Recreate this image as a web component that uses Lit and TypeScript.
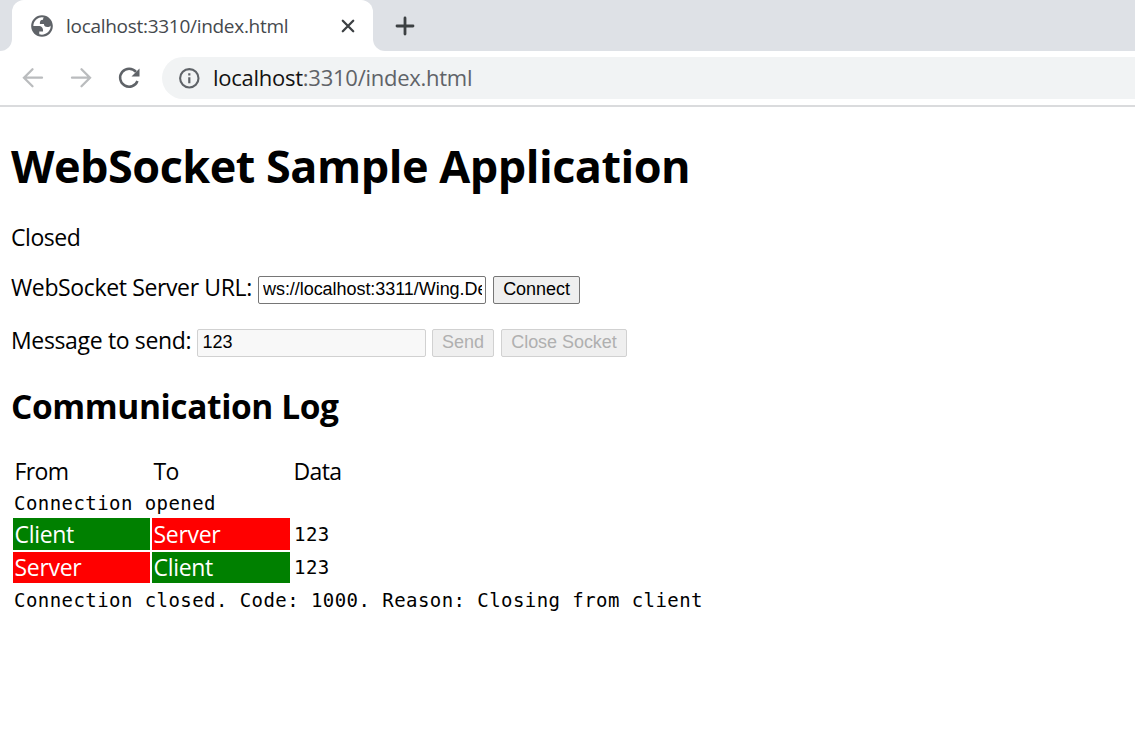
import { LitElement, html, css } from "lit";
import { customElement, property } from "lit/decorators.js";

@customElement("browser-chrome")
class BrowserChrome extends LitElement {
  @property() host = "";
  @property() path = "";

  static styles = css`
    :host { display: block; font-family: "Open Sans", "Noto Sans", sans-serif; }
    svg { display: block; flex: none; }
    .strip { display: flex; height: 51px; background: #dee1e6; }
    .flare { width: 12px; height: 51px; flex: none; background: #fff; }
    .flare i { display: block; height: 51px; background: #dee1e6; }
    .flare.left i { border-bottom-right-radius: 12px; }
    .flare.right i { border-bottom-left-radius: 12px; }
    .tab { box-sizing: border-box; width: 361px; height: 51px; background: #fff; border-radius: 12px 12px 0 0; display: flex; align-items: center; padding: 0 14px 0 17px; }
    .corner { background: #dee1e6; }
    .title { margin-left: 11px; flex: 1; font-size: 19px; line-height: 51px; padding-top: 2px; letter-spacing: -0.29px; color: #45494d; white-space: nowrap; }
    .plus { margin: 15px 0 0 9px; }
    .bar { box-sizing: border-box; height: 56px; border-bottom: 2px solid #dadbdd; display: flex; align-items: center; padding-left: 21px; background: #fff; }
    .nav { margin-right: 24px; }
    .pill { flex: 1; height: 42px; margin-left: -3px; background: #f1f3f4; border-radius: 21px 0 0 21px; display: flex; align-items: center; padding-left: 15px; }
    .url { margin-left: 12px; font-size: 22px; line-height: 40px; padding-bottom: 2px; letter-spacing: -0.26px; color: #5f6368; white-space: nowrap; }
    .url b { font-weight: 400; color: #111; }
  `;

  render() {
    return html`
      <div class="strip">
        <div class="flare left"><i></i></div>
        <div class="corner"><div class="tab">
          <svg width="26" height="26" viewBox="0 0 24 24"><path fill="#5f6368" fill-rule="evenodd" d="M12 2C6.480 2 2 6.480 2 12s4.480 10 10 10 10-4.480 10-10S17.520 2 12 2zM4 12h4.400c3.407.022 4.922 1.730 4.543 5.127H9.488v2.470a8.004 8.004 0 0 0 10.498-8.083C19.327 12.504 18.332 13 17 13c-2.137 0-3.206-.916-3.206-2.750h-3.748c-.274-2.728.683-4.092 2.870-4.092 0-.975.327-1.597.811-1.970A8.004 8.004 0 0 0 4 12z"/></svg>
          <span class="title">${this.host}${this.path}</span>
          <svg width="22" height="22" viewBox="0 0 22 22"><path d="M5.800 5.800l10.400 10.400M16.200 5.800L5.800 16.200" stroke="#3c4043" stroke-width="2.300" stroke-linecap="round"/></svg>
        </div></div>
        <div class="flare right"><i></i></div>
        <svg class="plus" width="22" height="22" viewBox="0 0 22 22"><path d="M11 3v16M3 11h16" stroke="#3c4043" stroke-width="2.800" stroke-linecap="round"/></svg>
      </div>
      <div class="bar">
        <svg class="nav" width="24" height="24" viewBox="0 0 24 24"><path d="M21 11.700H4M11.500 3.200L3 11.700l8.500 8.500" fill="none" stroke="#babcbe" stroke-width="2.300" stroke-linecap="round"/></svg>
        <svg class="nav" width="24" height="24" viewBox="0 0 24 24"><path d="M3 11.700h17M12.500 3.200l8.500 8.500-8.500 8.500" fill="none" stroke="#babcbe" stroke-width="2.300" stroke-linecap="round"/></svg>
        <svg class="nav" width="24" height="24" viewBox="0 0 24 24"><path d="M19 5.900A9 9 0 1 0 20.500 15" fill="none" stroke="#5f6368" stroke-width="2.500"/><path d="M22.500 2.500v8h-8z" fill="#5f6368"/></svg>
        <div class="pill">
          <svg width="24" height="24" viewBox="0 0 24 24"><circle cx="12.300" cy="12.300" r="9.200" fill="none" stroke="#5f6368" stroke-width="2.100"/><path d="M12.300 11.300v6M12.300 7.300v2.200" stroke="#5f6368" stroke-width="2.200"/></svg>
          <span class="url"><b>${this.host.split(":")[0]}</b>:${this.host.split(":")[1]}${this.path}</span>
        </div>
      </div>`;
  }
}

@customElement("app-root")
class AppRoot extends LitElement {
  static styles = css`
    :host { display: block; height: 733px; overflow: hidden; background: #fff; color: #000; font-family: "Open Sans", "Noto Sans", sans-serif; font-size: 23px; letter-spacing: -0.35px; }
    browser-chrome { letter-spacing: 0; }
    .page { padding-left: 11px; white-space: nowrap; }
    h1, h2, p { margin: 0; }
    h1 { padding-top: 28px; font-size: 45px; line-height: 62px; font-weight: 700; letter-spacing: -0.5px; }
    .status { padding-top: 23px; line-height: 34px; height: 32px; letter-spacing: -0.45px; }
    .row { display: flex; align-items: flex-start; height: 28px; }
    .row.url { margin-top: 24px; }
    .row.msg { margin-top: 25px; }
    .label { line-height: 22px; }
    .row.url .label { width: 247px; letter-spacing: -0.37px; }
    .row.msg .label { width: 186px; }
    input, button { box-sizing: border-box; height: 28px; margin: 0; font: 18px "Liberation Sans", Arial, sans-serif; letter-spacing: -0.05px; border-radius: 2px; color: #000; }
    input { width: 228px; padding: 0 3px 2px 4px; border: 1px solid #767676; background: #fff; }
    .row.msg input { width: 229px; padding-left: 4.5px; }
    button { padding: 0 0 2px; margin-left: 7px; border: 1px solid #767676; background: #efefef; line-height: 24px; }
    input:disabled { border-color: #d1d1d1; background: #f8f8f8; color: #000; }
    button:disabled { border-color: #d1d1d1; background: #efefef; color: #b0b0b0; }
    .connect { width: 87px; }
    .send { width: 62px; margin-left: 6px; }
    .close { width: 126px; }
    h2 { padding-top: 26px; font-size: 33.5px; line-height: 47px; height: 46px; font-weight: 700; letter-spacing: -0.4px; }
    .log { display: grid; grid-template-columns: 137px 138px 1fr; column-gap: 2px; padding: 25px 0 0 2px; align-items: center; }
    .cell { height: 32px; line-height: 32px; padding-left: 2px; }
    .head { line-height: 34px; padding-left: 1.5px; letter-spacing: -0.65px; }
    .mono { font-family: "DejaVu Sans Mono", monospace; font-size: 19px; letter-spacing: 0.44px; }
    .full { grid-column: 1 / -1; height: 32px; line-height: 34px; padding-left: 1px; }
    .row2 { margin-top: 2px; height: 31px; line-height: 31px; }
    .tinted { color: #fff; padding-left: 1.5px; letter-spacing: -0.3px; }
    .last { line-height: 35px; }
    .Client { background: #008000; }
    .Server { background: #ff0000; }
  `;

  private entries = [["Client", "Server", "123"], ["Server", "Client", "123"]];

  render() {
    return html`
      <browser-chrome host="localhost:3310" path="/index.html"></browser-chrome>
      <div class="page">
        <h1><span>WebSocket Sample Application</span></h1>
        <p class="status">Closed</p>
        <div class="row url">
          <span class="label">WebSocket Server URL:</span>
          <input .value=${"ws://localhost:3311/Wing.Demo"} />
          <button class="connect">Connect</button>
        </div>
        <div class="row msg">
          <span class="label">Message to send:</span>
          <input disabled .value=${"123"} />
          <button class="send" disabled>Send</button>
          <button class="close" disabled>Close Socket</button>
        </div>
        <h2>Communication Log</h2>
        <div class="log">
          <span class="cell head">From</span><span class="cell head">To</span><span class="cell head">Data</span>
          <span class="full mono">Connection opened</span>
          ${this.entries.map(([from, to, data], i) => html`
            <span class="cell tinted ${from} ${i ? "row2" : ""}">${from}</span>
            <span class="cell tinted ${to} ${i ? "row2" : ""}">${to}</span>
            <span class="cell mono ${i ? "row2" : ""}">${data}</span>`)}
          <span class="full mono last">Connection closed. Code: 1000. Reason: Closing from client</span>
        </div>
      </div>`;
  }
}
